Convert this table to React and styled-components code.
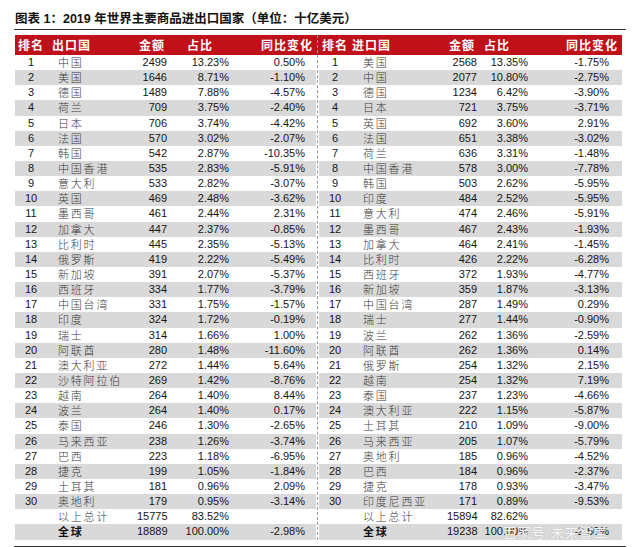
import React from 'react';
import styled, { createGlobalStyle } from 'styled-components';

const GlobalStyle = createGlobalStyle`
  body {
    margin: 0;
    background: #fff;
  }
`;

const RED = '#c0101a';
const STRIPE = '#d9d9d9';

const Page = styled.div`
  position: relative;
  width: 612px;
  height: 547px;
  padding: 10px 14px 0 14px;
  overflow: hidden;
`;

const Title = styled.div`
  height: 19px;
  line-height: 19px;
  padding-left: 1px;
  border-bottom: 1px solid #333;
  font-family: 'Liberation Sans', 'Noto Sans CJK SC', sans-serif;
  font-size: 12.5px;
  font-weight: 700;
  color: #111;
  white-space: nowrap;
`;

const Table = styled.div`
  display: flex;
  margin-top: 5px;
  padding-left: 1px;
`;

const Half = styled.div`
  width: ${(p) => p.$width}px;
  display: flex;
  flex-direction: column;
`;

const Divider = styled.div`
  width: 3px;
  display: flex;
  justify-content: center;
  background: linear-gradient(to bottom, ${RED} 0 20px, #fff 20px);
`;

const DividerLine = styled.div`
  width: 0;
  border-left: 1px dashed #9a9a9a;
`;

const Row = styled.div`
  display: grid;
  grid-template-columns: ${(p) => p.$cols};
  height: ${(p) => (p.$head ? '20px' : '15.15px')};
  align-items: center;
  background: ${(p) => (p.$head ? RED : p.$striped ? STRIPE : '#fff')};
`;

const HeadCell = styled.div`
  font-family: 'Noto Sans CJK SC', sans-serif;
  font-size: 12px;
  font-weight: 700;
  color: #fff;
  letter-spacing: 1px;
  white-space: nowrap;
  text-align: ${(p) => p.$align || 'left'};
  padding-left: ${(p) => p.$pl || 0}px;
  padding-right: ${(p) => p.$pr || 0}px;
  line-height: 20px;
`;

const NumCell = styled.div`
  font-family: 'Liberation Sans', Arial, sans-serif;
  font-size: 11px;
  color: #151515;
  text-align: ${(p) => p.$align || 'right'};
  padding-right: ${(p) => p.$pr || 0}px;
  white-space: nowrap;
  line-height: 15px;
`;

const NameCell = styled.div`
  font-family: 'Noto Sans CJK SC', sans-serif;
  font-size: 11px;
  font-weight: ${(p) => (p.$bold ? 700 : 300)};
  color: ${(p) => (p.$bold ? '#111' : '#3a3a3a')};
  letter-spacing: 1.8px;
  padding-left: ${(p) => p.$pl}px;
  white-space: nowrap;
  line-height: 15px;
`;

const BottomRule = styled.div`
  margin-top: 6px;
  border-top: 1.5px solid #333;
`;

const Watermark = styled.div`
  position: absolute;
  left: 503px;
  top: 522px;
  font-family: 'Noto Sans CJK SC', sans-serif;
  font-size: 14px;
  color: rgba(255, 255, 255, 0.88);
  text-shadow: 0 0 1px rgba(120, 120, 120, 0.5);
  white-space: nowrap;
`;

const exportRows = [
  ['中国', '2499', '13.23%', '0.50%'],
  ['美国', '1646', '8.71%', '-1.10%'],
  ['德国', '1489', '7.88%', '-4.57%'],
  ['荷兰', '709', '3.75%', '-2.40%'],
  ['日本', '706', '3.74%', '-4.42%'],
  ['法国', '570', '3.02%', '-2.07%'],
  ['韩国', '542', '2.87%', '-10.35%'],
  ['中国香港', '535', '2.83%', '-5.91%'],
  ['意大利', '533', '2.82%', '-3.07%'],
  ['英国', '469', '2.48%', '-3.62%'],
  ['墨西哥', '461', '2.44%', '2.31%'],
  ['加拿大', '447', '2.37%', '-0.85%'],
  ['比利时', '445', '2.35%', '-5.13%'],
  ['俄罗斯', '419', '2.22%', '-5.49%'],
  ['新加坡', '391', '2.07%', '-5.37%'],
  ['西班牙', '334', '1.77%', '-3.79%'],
  ['中国台湾', '331', '1.75%', '-1.57%'],
  ['印度', '324', '1.72%', '-0.19%'],
  ['瑞士', '314', '1.66%', '1.00%'],
  ['阿联酋', '280', '1.48%', '-11.60%'],
  ['澳大利亚', '272', '1.44%', '5.64%'],
  ['沙特阿拉伯', '269', '1.42%', '-8.76%'],
  ['越南', '264', '1.40%', '8.44%'],
  ['波兰', '264', '1.40%', '0.17%'],
  ['泰国', '246', '1.30%', '-2.65%'],
  ['马来西亚', '238', '1.26%', '-3.74%'],
  ['巴西', '223', '1.18%', '-6.95%'],
  ['捷克', '199', '1.05%', '-1.84%'],
  ['土耳其', '181', '0.96%', '2.09%'],
  ['奥地利', '179', '0.95%', '-3.14%'],
];

const importRows = [
  ['美国', '2568', '13.35%', '-1.75%'],
  ['中国', '2077', '10.80%', '-2.75%'],
  ['德国', '1234', '6.42%', '-3.90%'],
  ['日本', '721', '3.75%', '-3.71%'],
  ['英国', '692', '3.60%', '2.91%'],
  ['法国', '651', '3.38%', '-3.02%'],
  ['荷兰', '636', '3.31%', '-1.48%'],
  ['中国香港', '578', '3.00%', '-7.78%'],
  ['韩国', '503', '2.62%', '-5.95%'],
  ['印度', '484', '2.52%', '-5.95%'],
  ['意大利', '474', '2.46%', '-5.91%'],
  ['墨西哥', '467', '2.43%', '-1.93%'],
  ['加拿大', '464', '2.41%', '-1.45%'],
  ['比利时', '426', '2.22%', '-6.28%'],
  ['西班牙', '372', '1.93%', '-4.77%'],
  ['新加坡', '359', '1.87%', '-3.13%'],
  ['中国台湾', '287', '1.49%', '0.29%'],
  ['瑞士', '277', '1.44%', '-0.90%'],
  ['波兰', '262', '1.36%', '-2.59%'],
  ['阿联酋', '262', '1.36%', '0.14%'],
  ['俄罗斯', '254', '1.32%', '2.15%'],
  ['越南', '254', '1.32%', '7.19%'],
  ['泰国', '237', '1.23%', '-4.66%'],
  ['澳大利亚', '222', '1.15%', '-5.87%'],
  ['土耳其', '210', '1.09%', '-9.00%'],
  ['马来西亚', '205', '1.07%', '-5.79%'],
  ['奥地利', '185', '0.96%', '-4.52%'],
  ['巴西', '184', '0.96%', '-2.37%'],
  ['捷克', '178', '0.93%', '-3.47%'],
  ['印度尼西亚', '171', '0.89%', '-9.53%'],
];

const layouts = {
  left: {
    width: 301,
    cols: '32px 90px 30px 62px 87px',
    headName: 5,
    name: 11,
    headPct: 16,
    changePr: 11,
    headChange: 3,
  },
  right: {
    width: 303,
    cols: '32px 96px 30px 51px 94px',
    headName: 1,
    name: 12,
    headPct: 18,
    changePr: 13,
    headChange: 4,
  },
};

function TradeTable({ side, label, rows, total, world }) {
  const l = layouts[side];
  return (
    <Half $width={l.width}>
      <Row $head $cols={l.cols}>
        <HeadCell $align="center">排名</HeadCell>
        <HeadCell $pl={l.headName}>{label}</HeadCell>
        <HeadCell $align="center">金额</HeadCell>
        <HeadCell $align="right" $pr={l.headPct}>占比</HeadCell>
        <HeadCell $align="right" $pr={l.headChange}>同比变化</HeadCell>
      </Row>
      {rows.map(([name, amount, pct, change], i) => (
        <Row key={name} $cols={l.cols} $striped={i % 2 === 1}>
          <NumCell $align="center">{i + 1}</NumCell>
          <NameCell $pl={l.name}>{name}</NameCell>
          <NumCell>{amount}</NumCell>
          <NumCell>{pct}</NumCell>
          <NumCell $pr={l.changePr}>{change}</NumCell>
        </Row>
      ))}
      <Row $cols={l.cols}>
        <NumCell />
        <NameCell $pl={l.name}>以上总计</NameCell>
        <NumCell>{total[0]}</NumCell>
        <NumCell>{total[1]}</NumCell>
        <NumCell $pr={l.changePr} />
      </Row>
      <Row $cols={l.cols} $striped>
        <NumCell />
        <NameCell $pl={l.name} $bold>全球</NameCell>
        <NumCell>{world[0]}</NumCell>
        <NumCell>{world[1]}</NumCell>
        <NumCell $pr={l.changePr}>{world[2]}</NumCell>
      </Row>
    </Half>
  );
}

function App() {
  return (
    <Page>
      <GlobalStyle />
      <Title>图表 1：2019 年世界主要商品进出口国家（单位：十亿美元）</Title>
      <Table>
        <TradeTable
          side="left"
          label="出口国"
          rows={exportRows}
          total={['15775', '83.52%']}
          world={['18889', '100.00%', '-2.98%']}
        />
        <Divider>
          <DividerLine />
        </Divider>
        <TradeTable
          side="right"
          label="进口国"
          rows={importRows}
          total={['15894', '82.62%']}
          world={['19238', '100.00%', '-2.50%']}
        />
      </Table>
      <BottomRule />
      <Watermark>百家号/未来智库</Watermark>
    </Page>
  );
}

export default App;
